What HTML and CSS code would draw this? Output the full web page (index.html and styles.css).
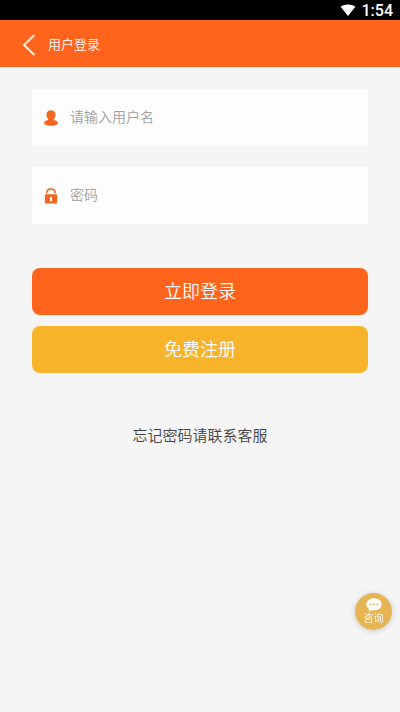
FILE: index.html
```html
<!DOCTYPE html>
<html lang="zh-CN">
<head>
<meta charset="utf-8">
<meta name="viewport" content="width=device-width, initial-scale=1">
<title>用户登录</title>
<link rel="stylesheet" href="styles.css">
</head>
<body>
<div class="status">
  <svg class="wifi" viewBox="0 0 16 12" aria-hidden="true"><path d="M8 12 .6 2.800C4.600-.4 11.400-.4 15.400 2.800Z"/></svg>
  <span>1:54</span>
</div>
<header class="bar">
  <a class="back" href="#" aria-label="返回">
    <svg viewBox="0 0 14 22" aria-hidden="true"><path d="M12.500 1 2 11l10.500 10"/></svg>
  </a>
  <h1 class="title">用户登录</h1>
</header>
<main class="content">
  <form class="form">
    <div class="field">
      <label for="user" aria-label="用户名">
        <svg class="icon" viewBox="0 0 14 16" aria-hidden="true"><path d="M7 .2c2.800 0 4.500 1.700 4.500 4.300 0 1.900-.6 3.700-1.700 4.600v1c2.500.4 4.100 1.300 4.100 2.900 0 1.700-2.900 2.700-6.900 2.700S.1 14.700.1 13c0-1.600 1.600-2.500 4.100-2.900v-1C3.100 8.200 2.500 6.400 2.500 4.500 2.500 1.900 4.200.2 7 .2Z"/></svg>
      </label>
      <input id="user" type="text" placeholder="请输入用户名">
    </div>
    <div class="field">
      <label for="pass" aria-label="密码">
        <svg class="icon" viewBox="0 0 14 16" aria-hidden="true"><path class="shackle" d="M2.600 5.200C2.700 2.500 4.500.9 7 .9s4.300 1.600 4.400 4.300"/><path fill-rule="evenodd" d="M1.800 6.200h10.400q.9 0 .9.900v7.600q0 .9-.9.900H1.800q-.9 0-.9-.9V7.100q0-.9.9-.9ZM5.900 9v4.300h2.200V9Z"/></svg>
      </label>
      <input id="pass" type="password" placeholder="密码">
    </div>
    <div class="actions">
      <button class="btn login" type="submit">立即登录</button>
      <button class="btn register" type="button">免费注册</button>
    </div>
  </form>
  <a class="forgot" href="#">忘记密码请联系客服</a>
</main>
<button class="chat" type="button">
  <svg viewBox="0 0 16 14" aria-hidden="true"><path d="M8 .3c4.300 0 7.700 2.600 7.700 6S12.300 12.300 8 12.300c-.8 0-1.500-.1-2.200-.2-.8.700-2 1.300-3.400 1.300.5-.7.800-1.500.7-2.500C1.300 9.800.3 8.200.3 6.300c0-3.400 3.400-6 7.700-6Z"/><g class="dots"><circle cx="4.500" cy="6.500" r="1"/><circle cx="8" cy="6.500" r="1"/><circle cx="11.500" cy="6.500" r="1"/></g></svg>
  <span>咨询</span>
</button>
</body>
</html>
```
FILE: styles.css
```css
* {
  box-sizing: border-box;
}

body {
  margin: 0;
  min-height: 100vh;
  background: #f5f5f5;
  color: #444;
  font-family: Roboto, "Noto Sans CJK SC", sans-serif;
  font-weight: 350;
}

.status {
  display: flex;
  align-items: center;
  justify-content: flex-end;
  gap: 6px;
  height: 20px;
  padding: 2px 7px 0 0;
  background: #000;
  color: #fff;
  font-size: 16px;
  font-weight: 500;
  line-height: 18px;
}

.wifi {
  width: 16px;
  height: 12px;
  margin-bottom: 2px;
  fill: #fff;
}

.bar {
  display: flex;
  align-items: center;
  gap: 12px;
  height: 47px;
  padding: 2px 22px 0;
  background: #ff641c;
  color: #fff;
}

.back {
  display: flex;
}

.back svg {
  width: 14px;
  height: 22px;
  fill: none;
  stroke: #ffeedd;
  stroke-width: 2;
}

.title {
  margin: 0;
  font-size: 13px;
  font-weight: inherit;
  line-height: 20px;
}

.content {
  display: flex;
  flex-direction: column;
  align-items: center;
  padding: 22px 32px;
}

.form {
  display: flex;
  flex-direction: column;
  gap: 21px;
  width: 100%;
}

.field {
  display: flex;
  align-items: center;
  height: 57px;
  padding: 0 12px;
  border-radius: 3px;
  background: #fdfdfd;
}

.field label {
  display: flex;
}

.icon {
  width: 14px;
  height: 16px;
  fill: #f4661f;
}

.shackle {
  fill: none;
  stroke: #f4661f;
  stroke-width: 1.5;
}

.field input {
  flex: 1;
  min-width: 0;
  height: 100%;
  padding: 0 0 2px 12px;
  border: 0;
  outline: 0;
  background: none;
  color: #444;
  font-family: inherit;
  font-size: 14px;
  font-weight: inherit;
}

.field input::placeholder {
  color: #a0a0a0;
  opacity: 1;
}

.actions {
  display: flex;
  flex-direction: column;
  gap: 11px;
  margin-top: 23px;
}

.btn {
  height: 47px;
  padding: 0 0 4px;
  border: 0;
  border-radius: 8px;
  color: #fff;
  font-family: inherit;
  font-size: 18px;
  font-weight: inherit;
}

.login {
  background: #ff641c;
}

.register {
  background: #f7b42a;
}

.forgot {
  margin-top: 51px;
  color: #444;
  font-size: 15px;
  line-height: 24px;
  text-decoration: none;
}

.chat {
  position: fixed;
  right: 8px;
  bottom: 82px;
  display: flex;
  flex-direction: column;
  align-items: center;
  width: 37px;
  height: 37px;
  padding: 5px 0 0;
  border: 0;
  border-radius: 50%;
  background: #e6b453;
  box-shadow: 0 1px 6px rgba(0, 0, 0, 0.18);
  color: #fff;
  font-family: inherit;
  font-size: 10px;
  font-weight: inherit;
  line-height: 14px;
}

.chat svg {
  width: 16px;
  height: 14px;
  fill: #fff;
}

.chat .dots {
  fill: #e6b453;
}
```
